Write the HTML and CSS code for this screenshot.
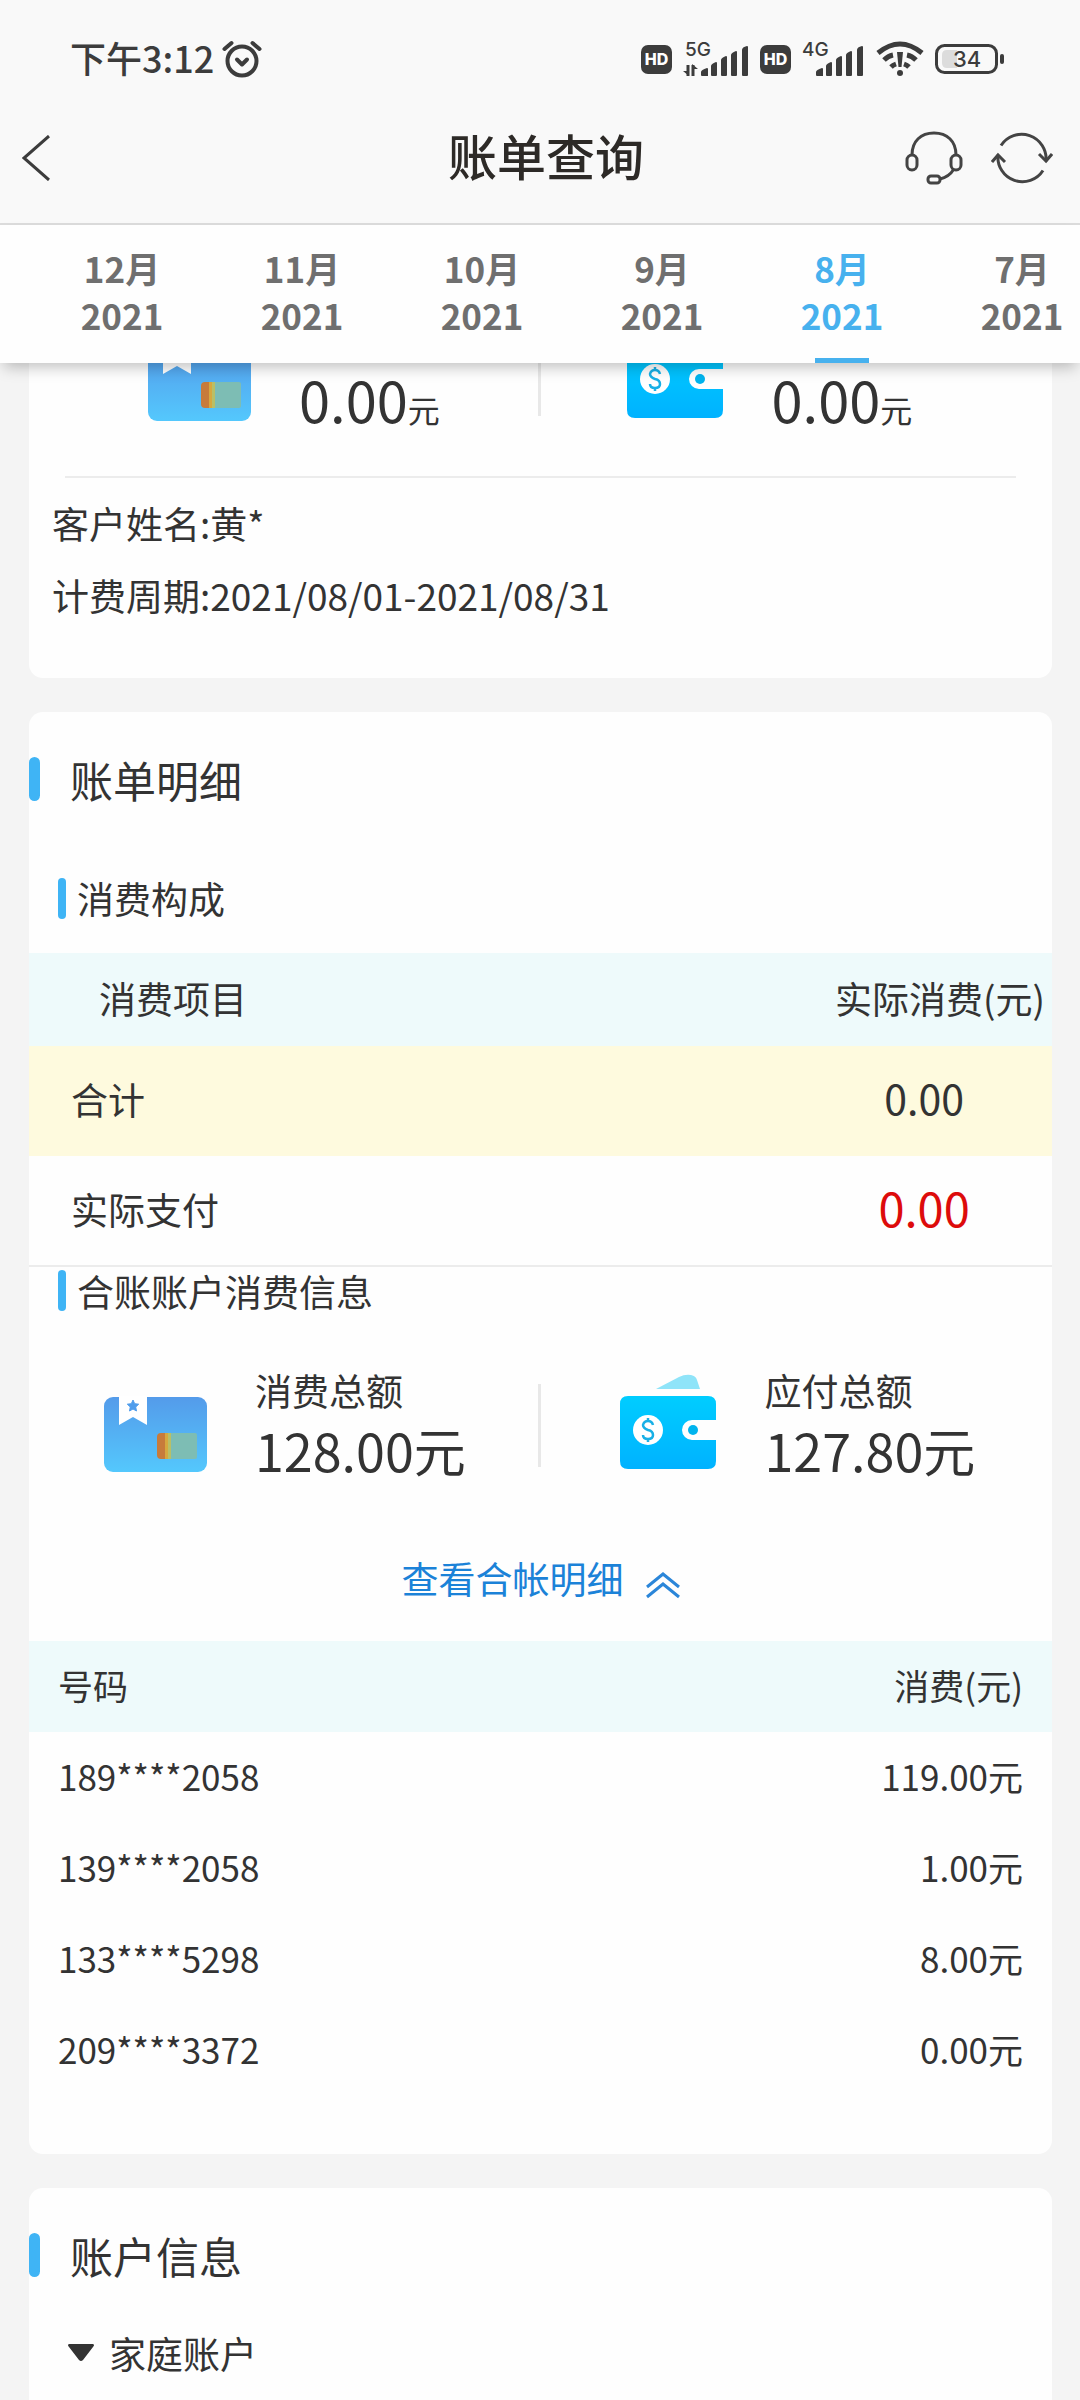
FILE: index.html
```html
<!DOCTYPE html>
<html lang="zh-CN">
<head>
    <meta charset="UTF-8">
    <meta name="viewport" content="width=device-width, initial-scale=1.0">
    <title>账单查询</title>
    <link rel="stylesheet" href="styles.css">
</head>
<body>
    <!-- 图标定义 -->
    <svg class="defs" width="0" height="0" aria-hidden="true">
        <defs>
            <linearGradient id="ledger-bg" x1="0" y1="0" x2="0" y2="1">
                <stop offset="0" stop-color="#549bea"/>
                <stop offset="1" stop-color="#54c8fd"/>
            </linearGradient>
            <linearGradient id="wallet-bg" x1="0" y1="0" x2="0" y2="1">
                <stop offset="0" stop-color="#00cdff"/>
                <stop offset="1" stop-color="#00b2ff"/>
            </linearGradient>
        </defs>
        <symbol id="icon-ledger" viewBox="0 0 103 112">
            <rect x="0" y="25" width="103" height="75" rx="9" fill="url(#ledger-bg)"/>
            <path d="M15 24h28v29l-14-8-14 8z" fill="#fff"/>
            <path d="M29 28l1.700 3.700 4 .5-3 2.800.8 4-3.500-2-3.500 2 .8-4-3-2.800 4-.5z" fill="#4f9dec" stroke="#4f9dec"/>
            <path d="M57 61h8v26h-8q-4 0-4-4V65q0-4 4-4z" fill="#c77b3b"/>
            <rect x="61" y="61" width="5" height="26" fill="#d6a83f"/>
            <rect x="64" y="61" width="29" height="26" rx="2" fill="#7dbdb4"/>
            <rect x="64" y="61" width="3" height="26" fill="#b9bf66"/>
        </symbol>
        <symbol id="icon-wallet" viewBox="0 0 98 112">
            <path d="M37 17l23-12q6-3 12-2 5 1 6 5l3 9z" fill="#8fe4f9"/>
            <path d="M9 24h80q8 0 8 8v16H73a10 10 0 0 0 0 20h24v21q0 8-8 8H9q-8 0-8-8V32q0-8 8-8z" fill="url(#wallet-bg)"/>
            <circle cx="74" cy="58" r="5" fill="#00b4ee"/>
            <circle cx="29" cy="58" r="15" fill="#fff"/>
            <path d="M34 53q-1-4-5-4t-5 4q0 3 5 5 5 1 5 5 0 4-5 4t-5-4M29 46v4M29 66v4" fill="none" stroke="#18b0e6" stroke-width="2.500"/>
        </symbol>
        <symbol id="icon-bars" viewBox="0 0 48 30">
            <path d="M0 26q0-2 6-4 1 0 1 1v7H1q-1 0-1-1zM10 20q0-2 5-4 1 0 1 1v12q0 1-1 1h-4q-1 0-1-1zM20 14q0-2 5-4 1 0 1 1v18q0 1-1 1h-4q-1 0-1-1zM30 9q0-2 5-4 1 0 1 1v23q0 1-1 1h-4q-1 0-1-1zM41 4q0-3 5-4 1 0 1 1v28q0 1-1 1h-4q-1 0-1-1z" fill="#3c3c3c"/>
        </symbol>
    </svg>

    <header class="header">
        <div class="status-bar">
            <div class="status-time">
                <span>下午3:12</span>
                <svg width="40" height="38" viewBox="0 0 40 38" fill="none" stroke="#3c3c3c" stroke-width="4" stroke-linecap="round" stroke-linejoin="round">
                    <circle cx="20" cy="21" r="14.500"/>
                    <path d="M15 19.500l5 5 5-5"/>
                    <path d="M2.500 9l7-6M37.500 9l-7-6"/>
                </svg>
            </div>
            <div class="status-icons">
                <span class="hd">HD</span>
                <svg class="signal" width="66" height="38" viewBox="0 0 66 38">
                    <text x="2" y="16">5G</text>
                    <use href="#icon-bars" x="18" y="6" width="48" height="30"/>
                    <path d="M5 25v11M10 36V25" stroke="#3c3c3c" stroke-width="3"/>
                    <path d="M6 36l-6-5h6zM9 24l6 5H9z" fill="#3c3c3c"/>
                </svg>
                <span class="hd">HD</span>
                <svg class="signal" width="63" height="38" viewBox="0 0 63 38">
                    <text x="0" y="16">4G</text>
                    <use href="#icon-bars" x="14" y="6" width="48" height="30"/>
                </svg>
                <svg width="48" height="36" viewBox="0 0 48 36" fill="none" stroke="#3c3c3c">
                    <path d="M2 12q22-18 44 0" stroke-width="5"/>
                    <path d="M8 19q4-4 9-5M40 19q-4-4-9-5" stroke-width="5"/>
                    <path d="M15 26q2-2 5-3M33 26q-2-2-5-3" stroke-width="5"/>
                    <path d="M21 11h6l-1.500 15h-3z" fill="#3c3c3c" stroke="none"/>
                    <circle cx="24" cy="32" r="3" fill="#3c3c3c" stroke="none"/>
                </svg>
                <svg class="battery" width="69" height="30" viewBox="0 0 69 30">
                    <rect x="1.500" y="1.500" width="60" height="27" rx="8" fill="none" stroke="#3c3c3c" stroke-width="3"/>
                    <path d="M12 6h10v18H12q-5 0-5-5v-8q0-5 5-5z" fill="#dcdcdc"/>
                    <rect x="65" y="10" width="4" height="10" rx="2" fill="#3c3c3c"/>
                    <text x="32" y="23" text-anchor="middle">34</text>
                </svg>
            </div>
        </div>
        <nav class="nav-bar">
            <button type="button" class="icon-btn back" aria-label="返回">
                <svg width="28" height="46" viewBox="0 0 28 46" fill="none" stroke="#3c3c3c" stroke-width="3">
                    <path d="M27 1L2 23l25 22"/>
                </svg>
            </button>
            <h1>账单查询</h1>
            <div class="nav-actions">
                <button type="button" class="icon-btn" aria-label="客服">
                    <svg width="58" height="54" viewBox="0 0 58 54" fill="none" stroke="#444" stroke-width="3">
                        <path d="M7 24C7 10 16 2 29 2s22 8 22 22"/>
                        <rect x="2" y="24" width="10" height="15" rx="5"/>
                        <rect x="46" y="24" width="10" height="15" rx="5"/>
                        <rect x="23" y="45" width="12" height="7" rx="3"/>
                        <path d="M49 38q-5 8-14 10"/>
                    </svg>
                </button>
                <button type="button" class="icon-btn" aria-label="刷新">
                    <svg width="62" height="54" viewBox="0 0 62 54" fill="none" stroke="#444" stroke-width="3">
                        <path d="M10 14.500A24.500 24.500 0 0 1 55 30M52 39.500A24.500 24.500 0 0 1 7 24"/>
                        <path d="M48 23l7 7 6-7M1 31l6-7 7 7"/>
                    </svg>
                </button>
            </div>
        </nav>
    </header>

    <div class="tabs">
        <button type="button" class="tab">12月<br>2021</button>
        <button type="button" class="tab">11月<br>2021</button>
        <button type="button" class="tab">10月<br>2021</button>
        <button type="button" class="tab">9月<br>2021</button>
        <button type="button" class="tab active">8月<br>2021</button>
        <button type="button" class="tab">7月<br>2021</button>
    </div>

    <main>
        <!-- 本月汇总 -->
        <section class="card overview">
            <div class="figures">
                <div class="figure">
                    <svg width="103" height="112"><use href="#icon-ledger"/></svg>
                    <div class="figure-text">
                        <p class="amount">0.00<small>元</small></p>
                    </div>
                </div>
                <div class="figure">
                    <svg width="98" height="112"><use href="#icon-wallet"/></svg>
                    <div class="figure-text">
                        <p class="amount">0.00<small>元</small></p>
                    </div>
                </div>
            </div>
            <div class="customer">
                <p>客户姓名:黄*</p>
                <p>计费周期:2021/08/01-2021/08/31</p>
            </div>
        </section>

        <!-- 账单明细 -->
        <section class="card">
            <h2>账单明细</h2>
            <h3>消费构成</h3>
            <table class="bill">
                <thead>
                    <tr><th>消费项目</th><th>实际消费(元)</th></tr>
                </thead>
                <tbody>
                    <tr class="total"><td>合计</td><td>0.00</td></tr>
                    <tr class="paid"><td>实际支付</td><td>0.00</td></tr>
                </tbody>
            </table>
            <h3 class="tight">合账账户消费信息</h3>
            <div class="figures merged">
                <div class="figure">
                    <svg width="103" height="112"><use href="#icon-ledger"/></svg>
                    <div class="figure-text">
                        <p class="label">消费总额</p>
                        <p class="amount">128.00元</p>
                    </div>
                </div>
                <div class="figure">
                    <svg width="98" height="112"><use href="#icon-wallet"/></svg>
                    <div class="figure-text">
                        <p class="label">应付总额</p>
                        <p class="amount">127.80元</p>
                    </div>
                </div>
            </div>
            <a class="toggle" href="#numbers">
                查看合帐明细
                <svg width="34" height="28" viewBox="0 0 34 28" fill="none" stroke="#2b86d9" stroke-width="3">
                    <path d="M1 16L17 3l16 13M1 26l16-13 16 13"/>
                </svg>
            </a>
            <table class="numbers" id="numbers">
                <thead>
                    <tr><th>号码</th><th>消费(元)</th></tr>
                </thead>
                <tbody>
                    <tr><td>189****2058</td><td>119.00元</td></tr>
                    <tr><td>139****2058</td><td>1.00元</td></tr>
                    <tr><td>133****5298</td><td>8.00元</td></tr>
                    <tr><td>209****3372</td><td>0.00元</td></tr>
                </tbody>
            </table>
        </section>

        <!-- 账户信息 -->
        <section class="card">
            <h2>账户信息</h2>
            <button type="button" class="account">
                <svg width="26" height="17" viewBox="0 0 26 17"><path d="M1 0h24q2 1 0 3L15 16q-2 2-4 0L1 3q-2-2 0-3z" fill="#333"/></svg>
                家庭账户
            </button>
        </section>
    </main>
</body>
</html>
```
FILE: styles.css
```css
/* 全局样式 */
* {
    box-sizing: border-box;
}

body {
    margin: 0;
    height: 100vh;
    display: flex;
    flex-direction: column;
    overflow: hidden;
    background-color: #f4f4f4;
    color: #333;
    font-family: "Noto Sans CJK SC", sans-serif;
    font-size: 37px;
}

h1, h2, h3, p {
    margin: 0;
    font-weight: 400;
}

button {
    border: none;
    padding: 0;
    background: none;
    color: inherit;
    font: inherit;
    cursor: pointer;
}

svg {
    display: block;
    flex: none;
}

.defs {
    position: absolute;
}

/* 状态栏 */
.header {
    flex: none;
    background-color: #f9f9f9;
    border-bottom: 2px solid #dcdcdc;
}

.status-bar {
    display: flex;
    justify-content: space-between;
    align-items: center;
    height: 92px;
    padding: 26px 76px 0 70px;
    color: #3c3c3c;
}

.status-time {
    display: flex;
    align-items: center;
    gap: 8px;
    font-size: 36px;
    font-weight: 500;
    line-height: 40px;
}

.status-time span {
    padding-bottom: 4px;
}

.status-icons {
    display: flex;
    align-items: center;
    gap: 11px;
}

.hd {
    width: 31px;
    height: 29px;
    border-radius: 7px;
    background-color: #3c3c3c;
    color: #fff;
    font-family: Inter, sans-serif;
    font-size: 16px;
    font-weight: 800;
    line-height: 29px;
    text-align: center;
}

.signal text {
    font-family: Inter, sans-serif;
    font-size: 19px;
    font-weight: 500;
    fill: #3c3c3c;
}

.battery text {
    font-family: Inter, sans-serif;
    font-size: 22px;
    font-weight: 500;
    fill: #3c3c3c;
}

/* 导航栏 */
.nav-bar {
    display: grid;
    grid-template-columns: 1fr auto 1fr;
    align-items: center;
    height: 131px;
    padding: 0 10px 0 22px;
}

.nav-bar h1 {
    padding-bottom: 6px;
    color: #2d2a27;
    font-size: 49px;
    font-weight: 500;
    line-height: 72px;
}

.back {
    justify-self: start;
}

.nav-actions {
    display: flex;
    justify-content: flex-end;
    gap: 28px;
    padding-right: 17px;
}

/* 月份选项卡 */
.tabs {
    position: relative;
    z-index: 1;
    flex: none;
    display: flex;
    height: 138px;
    padding-left: 32px;
    background-color: #fefefe;
    box-shadow: 0 8px 14px -4px rgba(0, 0, 0, 0.25);
    overflow: hidden;
}

.tab {
    position: relative;
    flex: 0 0 180px;
    padding-bottom: 6px;
    color: #6f6f6f;
    font-size: 35px;
    font-weight: 700;
    line-height: 47px;
}

.tab.active {
    color: #47b1ee;
}

.tab.active::after {
    content: "";
    position: absolute;
    left: 35%;
    right: 35%;
    bottom: 0;
    height: 5px;
    background-color: #47b1ee;
}

/* 卡片 */
main {
    flex: 1;
    min-height: 0;
    padding: 0 28px 0 29px;
    overflow: hidden;
}

.card {
    margin-bottom: 34px;
    padding-bottom: 58px;
    border-radius: 14px;
    background-color: #fefefe;
}

.overview {
    margin-top: -48px;
    padding-bottom: 46px;
}

h2 {
    display: flex;
    align-items: center;
    gap: 30px;
    height: 136px;
    padding-bottom: 3px;
    font-size: 43px;
}

h2::before {
    content: "";
    width: 11px;
    height: 44px;
    border-radius: 6px;
    background-color: #3fb4f5;
}

h3 {
    display: flex;
    align-items: center;
    gap: 11px;
    height: 105px;
    padding: 0 29px 5px;
    font-size: 37px;
}

h3::before {
    content: "";
    width: 8px;
    height: 41px;
    border-radius: 4px;
    background-color: #3fb4f5;
}

h3.tight {
    height: 48px;
    padding-bottom: 1px;
}

/* 金额汇总 */
.figures {
    display: flex;
}

.figure {
    position: relative;
    flex: 0 0 50%;
    display: flex;
    align-items: center;
    gap: 48px;
    padding-left: 78px;
}

.figure:first-child {
    padding-left: 75px;
}

.figure + .figure::before {
    content: "";
    position: absolute;
    left: -3px;
    top: 18px;
    width: 3px;
    height: 83px;
    background-color: #e8e8e8;
}

.figure-text {
    display: flex;
    flex-direction: column;
    justify-content: flex-end;
    height: 124px;
}

.label {
    line-height: 52px;
}

.amount {
    font-size: 52px;
    line-height: 68px;
}

.amount small {
    font-size: 32px;
}

.overview .figure {
    padding-left: 85px;
}

.overview .figure:first-child {
    padding-left: 119px;
}

.overview .amount {
    font-size: 56px;
    line-height: 60px;
}

.merged {
    padding-top: 51px;
}

.merged .figure-text {
    padding-bottom: 6px;
}

.customer {
    position: relative;
    margin: 0 36px 0 23px;
    padding-top: 48px;
    padding-bottom: 1px;
    line-height: 72px;
}

.customer::before {
    content: "";
    position: absolute;
    left: 13px;
    right: 0;
    top: 37px;
    height: 2px;
    background-color: #ececec;
}

/* 表格 */
table {
    width: 100%;
    border-collapse: collapse;
}

th, td {
    padding: 0 0 4px;
    font-weight: 400;
    text-align: left;
}

th {
    background-color: #eefafb;
}

.bill th {
    height: 93px;
    padding-left: 70px;
}

.bill td {
    height: 110px;
    padding-left: 42px;
}

.bill th:last-child, .bill td:last-child {
    width: 25%;
    padding-left: 0;
    text-align: center;
    white-space: nowrap;
}

.bill th:last-child {
    padding-left: 32px;
}

.bill .total {
    background-color: #fefade;
}

.bill .total td:last-child {
    padding-bottom: 8px;
    font-size: 41px;
}

.bill .paid {
    border-bottom: 2px solid #ececec;
}

.bill .paid td:last-child {
    padding-bottom: 8px;
    color: #dd0b0b;
    font-size: 47px;
}

.numbers {
    font-size: 35px;
}

.numbers th, .numbers td {
    height: 91px;
    padding: 0 29px 4px;
}

.numbers th:last-child, .numbers td:last-child {
    text-align: right;
}

/* 展开链接 */
.toggle {
    display: flex;
    justify-content: center;
    align-items: center;
    gap: 22px;
    padding: 62px 0 37px;
    color: #1b82d8;
    line-height: 52px;
    text-decoration: none;
}

.toggle svg {
    margin-top: 14px;
}

/* 账户信息 */
.account {
    display: flex;
    align-items: center;
    gap: 15px;
    height: 60px;
    padding: 0 0 3px 39px;
}
```
